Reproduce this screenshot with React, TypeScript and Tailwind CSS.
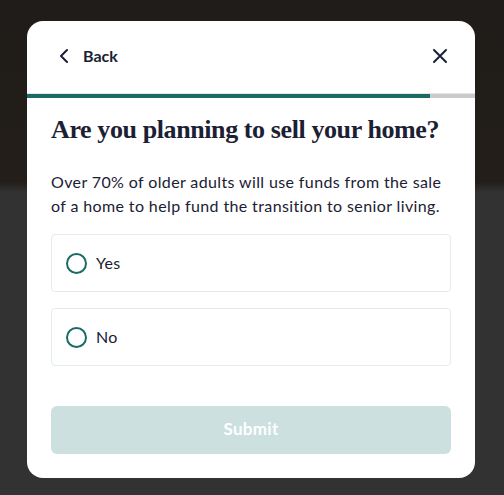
import React from "react";

export default function App() {
  return (
    <div className="w-[504px] h-[495px] overflow-hidden bg-[linear-gradient(to_bottom,#1f1c19_0px,#231e19_182px,#323232_192px,#323232_100%)] pt-[21px] pl-[27px]">
      <div className="w-[448px] h-[457px] bg-white rounded-[16px] overflow-hidden flex flex-col" style={{ fontFamily: "Lato, 'Noto Sans', sans-serif" }}>
        <div className="h-[72px] flex items-center justify-between pl-[31px] pr-[27px] pb-[3px]">
          <div className="flex items-center gap-[13px] text-[#1b2133]">
            <svg width="12" height="16" viewBox="0 0 12 16" fill="none" stroke="#1b2133" strokeWidth="2" strokeLinecap="round" strokeLinejoin="round">
              <path d="M9 2 L3 8 L9 14" />
            </svg>
            <span className="text-[16px] font-bold leading-none">Back</span>
          </div>
          <svg width="16" height="16" viewBox="0 0 16 16" fill="none" stroke="#1b2133" strokeWidth="2" strokeLinecap="round">
            <path d="M2 2 L14 14 M14 2 L2 14" />
          </svg>
        </div>
        <div className="flex h-[5px] border-t border-[#e4e4e4]">
          <div className="w-[403px] bg-[#1a6b66]" />
          <div className="flex-1 bg-[#cbcbcd]" />
        </div>
        <div className="px-[24px] pt-[16px] flex flex-col">
          <h1 className="text-[26px] leading-[32px] font-bold text-[#1b2133] tracking-[-0.4px]" style={{ fontFamily: "'Liberation Serif', 'DejaVu Serif', serif" }}>
            Are you planning to sell your home?
          </h1>
          <p className="mt-[24px] text-[16px] leading-[24px] text-[#1b2133] tracking-[0.38px]">
            Over 70% of older adults will use funds from the sale of a home to help fund the transition to senior living.
          </p>
          <div className="mt-[16px] flex flex-col gap-[16px]">
            {["Yes", "No"].map((o) => (
              <div key={o} className="h-[58px] border border-[#e2ecec] rounded-[4px] flex items-center pl-[14px] gap-[9px]">
                <div className="w-[21px] h-[21px] rounded-full border-[2.5px] border-[#1a6b66]" />
                <span className="text-[16px] text-[#1b2133] tracking-[0.3px]">{o}</span>
              </div>
            ))}
          </div>
          <button className="mt-[40px] h-[48px] pb-[3px] rounded-[6px] bg-[#cbe0df] text-white text-[17px] font-bold tracking-[0.3px]">
            Submit
          </button>
        </div>
      </div>
    </div>
  );
}
